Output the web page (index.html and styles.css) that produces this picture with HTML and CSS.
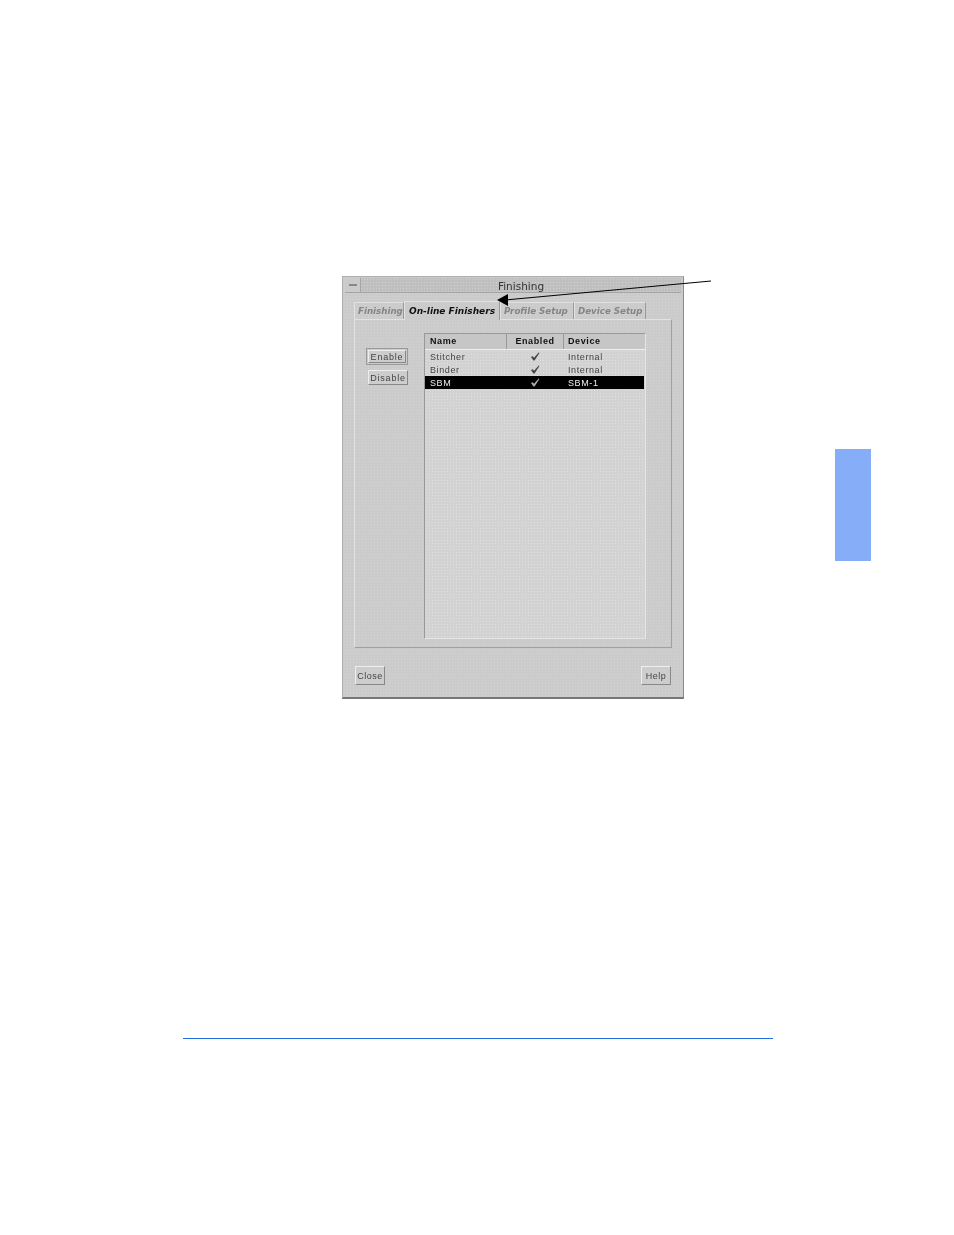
FILE: index.html
```html
<!DOCTYPE html>
<html lang="en">
<head>
    <meta charset="UTF-8">
    <meta name="viewport" content="width=device-width, initial-scale=1.0">
    <title>Finishing</title>
    <link rel="stylesheet" href="styles.css">
</head>
<body>
    <div class="page">
        <div class="window">
            <div class="title-bar">
                <div class="menu-btn"><span class="menu-dash"></span></div>
                <div class="title-text">Finishing</div>
            </div>

            <div class="tabs">
                <div class="tab tab-finishing">Finishing</div>
                <div class="tab tab-online active">On-line Finishers</div>
                <div class="tab tab-profile">Profile Setup</div>
                <div class="tab tab-device">Device Setup</div>
            </div>

            <div class="panel">
                <div class="side-buttons">
                    <div class="default-ring"><button class="btn">Enable</button></div>
                    <button class="btn btn-disable">Disable</button>
                </div>

                <div class="list">
                    <div class="list-row list-head">
                        <div class="col-name">Name</div>
                        <div class="col-enabled">Enabled</div>
                        <div class="col-device">Device</div>
                    </div>
                    <div class="list-body">
                        <div class="list-row">
                            <div class="col-name">Stitcher</div>
                            <div class="col-enabled"><svg class="check" viewBox="0 0 11 10"><path d="M1 5.5 L3 4.6 L4.4 6.4 L9.6 0.6 L10.4 1 L5 9.4 L3.8 9.4 Z"/></svg></div>
                            <div class="col-device">Internal</div>
                        </div>
                        <div class="list-row">
                            <div class="col-name">Binder</div>
                            <div class="col-enabled"><svg class="check" viewBox="0 0 11 10"><path d="M1 5.5 L3 4.6 L4.4 6.4 L9.6 0.6 L10.4 1 L5 9.4 L3.8 9.4 Z"/></svg></div>
                            <div class="col-device">Internal</div>
                        </div>
                        <div class="list-row selected">
                            <div class="col-name">SBM</div>
                            <div class="col-enabled"><svg class="check" viewBox="0 0 11 10"><path d="M1 5.5 L3 4.6 L4.4 6.4 L9.6 0.6 L10.4 1 L5 9.4 L3.8 9.4 Z"/></svg></div>
                            <div class="col-device">SBM-1</div>
                        </div>
                    </div>
                </div>
            </div>

            <div class="footer">
                <button class="btn btn-footer">Close</button>
                <button class="btn btn-footer">Help</button>
            </div>
        </div>

        <div class="rule"></div>

        <!-- callout arrow and chapter tab sit on top of the page -->
        <svg class="callout" viewBox="0 0 220 30" width="220" height="30">
            <line x1="214" y1="5" x2="8" y2="24" stroke="#000" stroke-width="1"/>
            <path d="M0 24 L11 18 L11 30 Z" fill="#000"/>
        </svg>
        <div class="chapter-tab"></div>
    </div>
</body>
</html>
```

FILE: styles.css
```css
* {
    box-sizing: border-box;
}

body {
    margin: 0;
    background-color: #fff;
    font-family: "Liberation Sans", Arial, sans-serif;
}

.page {
    position: relative;
    width: 954px;
    height: 1235px;
    padding: 276px 0 0 342px;
    overflow: hidden;
}

/* dialog window */
.window {
    width: 342px;
    height: 423px;
    padding: 1px 2px 2px 2px;
    display: flex;
    flex-direction: column;
    background-color: #cbcbcb;
    background-image: radial-gradient(circle, #d3d3d3 0.9px, transparent 1px);
    background-size: 3px 3px;
    border: 1px solid #b0b0b0;
    border-bottom: 2px solid #777;
    border-right: 1px solid #8c8c8c;
    filter: blur(0.35px);
}

.title-bar {
    position: relative;
    height: 15px;
    flex: none;
    display: flex;
    border-bottom: 1px solid #a4a4a4;
    background-color: #bfbfbf;
    background-image: radial-gradient(circle, #d0d0d0 0.9px, transparent 1px);
    background-size: 3px 3px;
}

.menu-btn {
    width: 16px;
    display: flex;
    align-items: center;
    justify-content: center;
    border-right: 1px solid #a4a4a4;
    background-color: #cbcbcb;
}

.menu-dash {
    width: 8px;
    height: 2px;
    background-color: #888;
}

.title-text {
    flex: 1;
    text-align: center;
    font-family: "DejaVu Sans", sans-serif;
    font-size: 10.5px;
    line-height: 17px;
    color: #333;
}

/* tabs */
.tabs {
    display: flex;
    align-items: flex-end;
    height: 26px;
    flex: none;
    padding-left: 9px;
    position: relative;
    z-index: 1;
}

.tab {
    height: 17px;
    padding: 0 0 0 3px;
    font-family: "DejaVu Sans", sans-serif;
    font-size: 8.7px;
    font-weight: bold;
    font-style: italic;
    line-height: 17px;
    color: #858585;
    border-top: 1px solid #e2e2e2;
    border-left: 1px solid #e2e2e2;
    border-right: 1px solid #999;
    white-space: nowrap;
    flex: none;
}

.tab-finishing {
    width: 50px;
}

.tab-online {
    width: 96px;
}

.tab-profile {
    width: 74px;
}

.tab-device {
    width: 72px;
}

.tab.active {
    height: 19px;
    line-height: 19px;
    margin-bottom: -1px;
    padding-left: 4px;
    font-size: 9px;
    color: #111;
    background-color: #cbcbcb;
}

/* main panel */
.panel {
    margin: 0 9px 0 9px;
    height: 329px;
    flex: none;
    display: flex;
    padding: 13px 0 8px 11px;
    border: 1px solid #e2e2e2;
    border-right: 1px solid #a0a0a0;
    border-bottom: 1px solid #a0a0a0;
}

.side-buttons {
    width: 58px;
    flex: none;
    padding-top: 15px;
    display: flex;
    flex-direction: column;
    align-items: flex-start;
}

.default-ring {
    padding: 1px;
    border: 1px solid #999;
    margin-bottom: 5px;
}

.btn {
    display: block;
    margin: 0;
    padding: 0;
    font-family: "Liberation Sans", Arial, sans-serif;
    font-size: 9px;
    letter-spacing: 0.8px;
    color: #444;
    background-color: #cdcdcd;
    border: 1px solid;
    border-color: #eee #888 #888 #eee;
    width: 38px;
    height: 13px;
    line-height: 10px;
}

.btn-disable {
    width: 40px;
    height: 15px;
    margin-left: 2px;
}

/* finisher list */
.list {
    width: 222px;
    height: 306px;
    flex: none;
    display: flex;
    flex-direction: column;
    border: 1px solid #999;
    border-right-color: #e6e6e6;
    border-bottom-color: #e6e6e6;
}

.list-row {
    display: flex;
    height: 13px;
    flex: none;
    font-size: 9px;
    letter-spacing: 0.6px;
    line-height: 14px;
    color: #444;
}

.list-head {
    height: 16px;
    line-height: 14px;
    font-weight: bold;
    color: #111;
    background-color: #c6c6c6;
    border-bottom: 1px solid #f0f0f0;
}

.list-head .col-enabled {
    align-items: flex-start;
}

.list-body {
    flex: 1;
    background-color: #d2d2d2;
    background-image: radial-gradient(circle, #e0e0e0 0.9px, transparent 1px);
    background-size: 3px 3px;
}

.list-body .col-enabled {
    padding-right: 2px;
}

.col-name {
    width: 82px;
    padding-left: 5px;
}

.col-enabled {
    width: 57px;
    display: flex;
    align-items: center;
    justify-content: center;
}

.col-device {
    padding-left: 4px;
}

.list-head .col-name,
.list-head .col-enabled {
    border-right: 1px solid #999;
}

.check {
    width: 10px;
    height: 9px;
    fill: #444;
}

.selected {
    width: 219px;
    background-color: #000;
    color: #eee;
}

.selected .check {
    fill: #aaa;
}

/* bottom buttons */
.footer {
    display: flex;
    justify-content: space-between;
    padding: 18px 10px 0 10px;
}

.btn-footer {
    width: 30px;
    height: 19px;
    letter-spacing: 0.5px;
}

/* page furniture */
.rule {
    width: 590px;
    height: 1px;
    margin: 339px 0 0 -159px;
    background-color: #1f6fe0;
}

.callout {
    position: absolute;
    left: 497px;
    top: 276px;
    overflow: visible;
}

.chapter-tab {
    position: absolute;
    left: 835px;
    top: 449px;
    width: 36px;
    height: 112px;
    background-color: #86adf7;
}
```
